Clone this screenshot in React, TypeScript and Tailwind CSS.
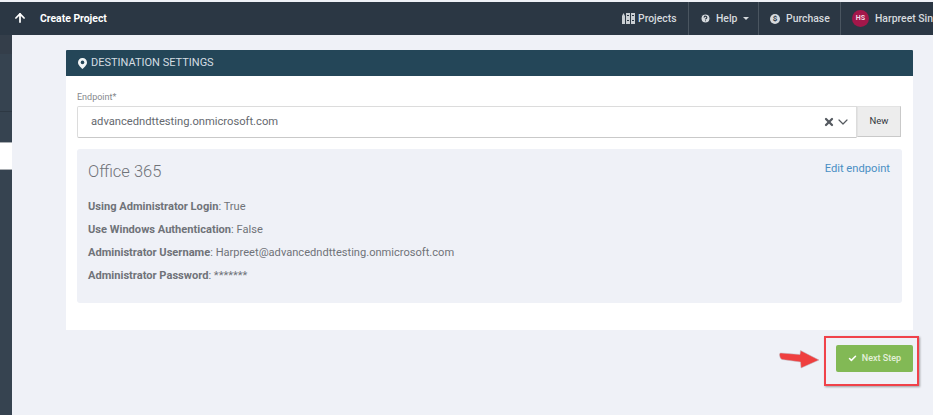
import { ArrowUp, Check, ChevronDown, CircleHelp, X } from "lucide-react";

function ProjectsIcon() {
  return (
    <svg width="13" height="13" viewBox="0 0 13 13" fill="#c9ced3">
      <path d="M0 4l1.5-3L3 4v8H0z" />
      <path d="M4 1h4v11H4zM5 3v1h2V3zM5 8v1h2V8z" fillRule="evenodd" />
      <path d="M9 1h4v11H9zM10 3v1h2V3zM10 8v1h2V8z" fillRule="evenodd" />
    </svg>
  );
}

function PinIcon() {
  return (
    <svg width="9" height="11" viewBox="0 0 9 11">
      <path d="M4.5 0A4.4 4.4 0 0 0 0 4.4C0 7 3 9.6 4.5 11 6 9.6 9 7 9 4.4A4.4 4.4 0 0 0 4.5 0z" fill="#f2f5f6" />
      <circle cx="4.5" cy="4.4" r="1.8" fill="#244658" />
    </svg>
  );
}

function Row({ label, value }: { label: string; value: string }) {
  return (
    <p className="text-[11.1px] leading-[23px] text-[#6f7379]">
      <span className="font-bold">{label}</span>: {value}
    </p>
  );
}

export default function App() {
  return (
    <div className="relative h-[415px] w-[933px] overflow-hidden bg-[#eff1f7] font-['Roboto',sans-serif]">
      {/* Top bar */}
      <div className="mt-[2px] flex h-[33px] items-center justify-between whitespace-nowrap bg-[#2b3744] text-[10.4px] text-[#d6dade]">
        <div className="flex items-center">
          <ArrowUp className="ml-[13px] h-[14px] w-[14px] text-white" strokeWidth={3} />
          <span className="ml-[13px] font-bold text-white">Create Project</span>
        </div>
        <div className="flex h-full w-[311px] shrink-0 items-center overflow-hidden">
          <div className="flex h-full w-[67px] shrink-0 items-center gap-[3px] border-r border-[#4a5560] font-medium">
            <ProjectsIcon />
            Projects
          </div>
          <div className="flex h-full w-[70px] shrink-0 items-center gap-[5px] border-r border-[#4a5560] pl-[11px] font-medium">
            <CircleHelp className="h-[11px] w-[11px] fill-[#d6dade] text-[#2b3744]" strokeWidth={2.5} />
            Help
            <span className="ml-[1px] h-0 w-0 border-x-[3px] border-t-[3px] border-x-transparent border-t-[#d6dade]" />
          </div>
          <div className="flex h-full w-[82px] shrink-0 items-center gap-[6px] border-r border-[#4a5560] pl-[11px] font-medium">
            <span className="flex h-[10px] w-[10px] items-center justify-center rounded-full bg-[#d6dade] text-[8px] font-bold leading-none text-[#2b3744]">
              $
            </span>
            Purchase
          </div>
          <div className="flex shrink-0 items-center gap-[6px] pl-[11px] font-medium">
            <span className="flex h-[17px] w-[17px] items-center justify-center rounded-full bg-[#a3174a] text-[7px] font-bold text-[#f3d9e2]">
              HS
            </span>
            Harpreet Singh
          </div>
        </div>
      </div>

      <div className="flex h-[380px]">
        {/* Collapsed sidebar */}
        <div className="flex w-3 shrink-0 flex-col bg-[#364350]">
          <div className="h-[19px] bg-[#343e4a]" />
          <div className="h-[58px] border-b border-[#2d3843]" />
          <div className="mt-[30px] h-[28px] border-y border-[#a9adb2] bg-white" />
        </div>

        {/* Main */}
        <div className="flex-1 pl-[54px] pr-5 pt-[15px]">
          <div className="bg-white">
            <div className="flex h-[26px] items-center gap-[4px] rounded-t-[1px] bg-[#244658] pl-[12px] text-[11px] text-[#d4dde2]">
              <PinIcon />
              DESTINATION SETTINGS
            </div>
            <div className="px-[11px] pb-[27px] pt-[12px]">
              <label className="block text-[9px] leading-[18px] text-[#85888d]">Endpoint*</label>
              <div className="flex w-[824px]">
                <div className="flex h-8 flex-1 items-center justify-between rounded-l-[2px] border border-[#dcdcdc] border-b-[#c9c9c9] pl-[13px] pr-[5px] text-[11.2px] text-[#65696f]">
                  advancedndttesting.onmicrosoft.com
                  <span className="flex items-center text-[#555a60]">
                    <X className="h-[12px] w-[12px]" strokeWidth={4.5} />
                    <ChevronDown className="h-[16px] w-[16px]" strokeWidth={1.8} />
                  </span>
                </div>
                <div className="flex h-[31px] w-[44px] items-center justify-center border border-[#e3e3e3] border-b-[#c9c9c9] border-r-[#c9c9c9] bg-[#ededed] text-[9.5px] text-[#33383f]">
                  New
                </div>
              </div>
              <div className="mt-[11px] h-[154px] rounded-[3px] bg-[#eff1f7] pl-[11px] pr-[12px] pt-[12px]">
                <div className="flex justify-between">
                  <h2 className="text-[16.5px] font-light leading-[22px] text-[#6f7379]">Office 365</h2>
                  <span className="text-[11.2px] leading-[15px] text-[#4a8fc4]">Edit endpoint</span>
                </div>
                <div className="mt-[12px]">
                  <Row label="Using Administrator Login" value="True" />
                  <Row label="Use Windows Authentication" value="False" />
                  <Row label="Administrator Username" value="Harpreet@advancedndttesting.onmicrosoft.com" />
                  <Row label="Administrator Password" value="*******" />
                </div>
              </div>
            </div>
          </div>

          <div className="mt-[15px] flex justify-end">
            <button className="flex h-[27px] w-[77px] items-center justify-center gap-[5px] rounded-[2px] bg-[#82b955] text-[9px] font-medium text-[#e4f0da]">
              <Check className="h-[9px] w-[9px] text-white" strokeWidth={4} />
              Next Step
            </button>
          </div>
        </div>
      </div>

      {/* Screenshot annotations */}
      <div className="absolute left-[824px] top-[336px] h-[50px] w-[95px] border-2 border-[#f0424a] shadow-[1px_1px_2px_rgba(0,0,0,0.35)]" />
      <svg className="absolute left-[779px] top-[350px]" width="41" height="19" viewBox="0 0 41 19">
        <path
          d="M0.5 4.5C0.5 3.5 1.2 3 2 3L21 4.5 21.5 0.5 40 10 22 18 21.5 12 3 9.5C1.4 9 0.5 6 0.5 4.5z"
          fill="#ef3f3f"
          stroke="#b9b9c0"
          strokeWidth="0.5"
        />
      </svg>
    </div>
  );
}
